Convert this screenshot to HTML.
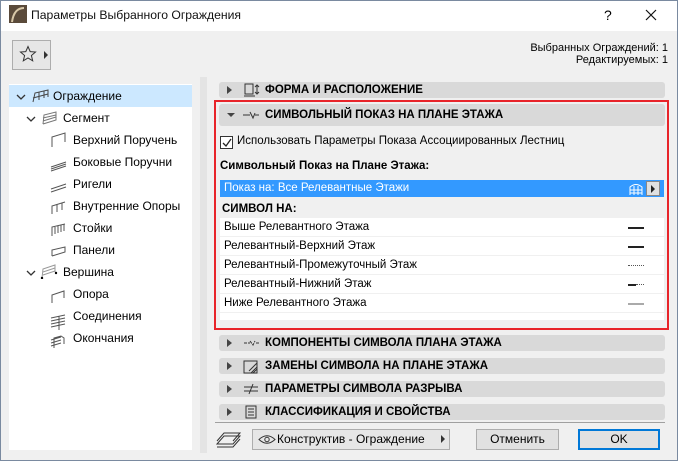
<!DOCTYPE html>
<html><head><meta charset="utf-8"><style>
*{margin:0;padding:0;box-sizing:border-box}
body{width:678px;height:461px;overflow:hidden;font-family:"Liberation Sans","DejaVu Sans",sans-serif;font-size:12px;color:#000;background:#f0f0f0;position:relative}
.abs{position:absolute}
.win{position:absolute;left:0;top:0;width:678px;height:461px;border:1px solid #7a8aa0}
.title{position:absolute;left:1px;top:1px;width:676px;height:30px;background:#fff}
.tree{position:absolute;left:9px;top:84px;width:183px;height:366px;background:#fff}
.ti{position:absolute;height:22px;line-height:22px;white-space:nowrap;font-size:12px}
.chev{position:absolute;width:12px;height:10px}
.hdr{position:absolute;left:219px;width:446px;height:16px;background:#d9d9d9;border-radius:3px;font-weight:bold;font-size:11.5px;line-height:16px}
.hdr .tx{position:absolute;left:46px}
.tri{position:absolute;left:8px;top:4px;width:0;height:0;border-left:5px solid #444;border-top:4px solid transparent;border-bottom:4px solid transparent}
.row{position:absolute;left:220px;width:444px;height:18px;background:#fff;line-height:18px;padding-left:4px;font-size:11.5px}
.sym{position:absolute;right:20px;top:9px;width:16px;height:1.5px;background:#222}
.btn{position:absolute;height:21px;background:#e1e1e1;border:1px solid #adadad;text-align:center;line-height:19px;font-size:12px}
</style></head><body>
<div class="win"></div>
<div class="title"></div>
<svg class="abs" style="left:9px;top:5px" width="18" height="18"><rect width="18" height="18" fill="#5a4a3a"/><path d="M3 17 Q5 3 15 3" stroke="#d8c8a8" stroke-width="2" fill="none"/></svg>
<div class="abs" style="left:31px;top:8px;font-size:12.2px;color:#111">Параметры Выбранного Ограждения</div>
<div class="abs" style="left:604px;top:7px;font-size:14px">?</div>
<svg class="abs" style="left:645px;top:9px" width="12" height="12"><path d="M1 1L11 11M11 1L1 11" stroke="#111" stroke-width="1.2"/></svg>
<div class="abs" style="left:12px;top:40px;width:39px;height:30px;border:1px solid #adadad;background:#e6e6e6"></div>
<svg class="abs" style="left:19px;top:45px" width="18" height="18"><path d="M9 1.5L11.2 6.6 16.5 7 12.4 10.5 13.7 15.8 9 13 4.3 15.8 5.6 10.5 1.5 7 6.8 6.6Z" fill="none" stroke="#333" stroke-width="1"/></svg>
<div class="abs" style="left:44px;top:51px;border-left:4px solid #333;border-top:4px solid transparent;border-bottom:4px solid transparent"></div>
<div class="abs" style="right:10px;top:42px;text-align:right;font-size:11px;line-height:12px">Выбранных Ограждений: 1<br>Редактируемых: 1</div>
<div class="tree"></div>
<div class="abs" style="left:9px;top:85px;width:183px;height:22px;background:#cce8ff"></div>
<div class="abs" style="left:200px;top:77px;width:7px;height:376px;background:#e4e4e4"></div>
<svg class="chev" style="left:15px;top:92px"><path d="M2 3L6 7 10 3" stroke="#333" fill="none" stroke-width="1.3"/></svg>
<svg class="abs" style="left:31px;top:89px" width="18" height="14"><path d="M2 13L4 4 17 1 17 8M2 9L17 5M8 3L8 11M13 2L13 9" stroke="#444" fill="none"/></svg>
<div class="ti" style="left:53px;top:85px">Ограждение</div>
<svg class="chev" style="left:25px;top:114px"><path d="M2 3L6 7 10 3" stroke="#333" fill="none" stroke-width="1.3"/></svg>
<svg class="abs" style="left:41px;top:111px" width="16" height="14"><path d="M2 13L3 4 15 1 15 9 2 13M2 7L15 4M2 10L15 6" stroke="#777" fill="none"/></svg>
<div class="ti" style="left:63px;top:107px">Сегмент</div>
<div class="ti" style="left:73px;top:129px">Верхний Поручень</div>
<div class="ti" style="left:73px;top:151px">Боковые Поручни</div>
<div class="ti" style="left:73px;top:173px">Ригели</div>
<div class="ti" style="left:73px;top:195px">Внутренние Опоры</div>
<div class="ti" style="left:73px;top:217px">Стойки</div>
<div class="ti" style="left:73px;top:239px">Панели</div>
<svg class="chev" style="left:25px;top:268px"><path d="M2 3L6 7 10 3" stroke="#333" fill="none" stroke-width="1.3"/></svg>
<svg class="abs" style="left:40px;top:263px" width="20" height="16"><path d="M2 15L3 6 15 2 15 9M3 9L15 5M3 12L15 8" stroke="#999" fill="none"/><circle cx="2" cy="15" r="1.2"/><circle cx="16" cy="10" r="1.2"/></svg>
<div class="ti" style="left:63px;top:261px">Вершина</div>
<div class="ti" style="left:73px;top:283px">Опора</div>
<div class="ti" style="left:73px;top:305px">Соединения</div>
<div class="ti" style="left:73px;top:327px">Окончания</div>
<svg class="abs" style="left:50px;top:132px" width="18" height="220" stroke="#555" fill="none">
<path d="M2 15L2 5 15 1 15 10"/>
<path d="M1 35L16 30M1 37L16 32M1 39L16 34"/>
<path d="M1 57L16 52M1 60L16 55"/>
<path d="M2 82L2 74 15 70M7 72L7 80M12 71L12 78"/>
<path d="M2 104L2 95 15 92M5 95L5 102M8 94L8 101M11 93L11 100M14 92L14 99"/>
<path d="M2 124L2 118 15 115 15 120 2 124"/>
<path d="M2 171L2 163 14 159 14 166"/>
<path d="M1 186L15 183M1 189L15 186M1 192L15 189M1 195L15 192M9 184L9 198"/>
<path d="M1 208L11 205M1 211L11 208M1 214L11 211M4 216L4 206 11 204 14 206 14 212"/>
</svg>
<div class="hdr" style="top:82px"><div class="tri"></div><svg class="abs" style="left:24px;top:1px" width="18" height="14"><rect x="2" y="1" width="8" height="10" fill="none" stroke="#333"/><path d="M1 13H12M14 2V11M12 4L14 2 16 4M12 9L14 11 16 9" stroke="#333" fill="none"/></svg><span class="tx">ФОРМА И РАСПОЛОЖЕНИЕ</span></div>
<div class="abs" style="left:214px;top:100px;width:455px;height:230px;border:2px solid #e8242a"></div>
<div class="hdr" style="top:104px;height:22px;line-height:22px"><div class="abs" style="left:8px;top:9px;border-top:4px solid #444;border-left:4px solid transparent;border-right:4px solid transparent"></div><svg class="abs" style="left:23px;top:6px" width="18" height="10"><path d="M1 5H8M8 2L11 8 13 3M13 5H17" stroke="#333" fill="none"/></svg><span class="tx">СИМВОЛЬНЫЙ ПОКАЗ НА ПЛАНЕ ЭТАЖА</span></div>
<div class="abs" style="left:220px;top:136px;width:13px;height:13px;border:1px solid #333;background:#fff"></div>
<svg class="abs" style="left:221px;top:137px" width="12" height="12"><path d="M2 6L5 9 10 2" stroke="#222" fill="none" stroke-width="1.3"/></svg>
<div class="abs" style="left:237px;top:135px;font-size:11.5px">Использовать Параметры Показа Ассоциированных Лестниц</div>
<div class="abs" style="left:220px;top:160px;font-weight:bold;font-size:11.5px">Символьный Показ на Плане Этажа:</div>
<div class="abs" style="left:220px;top:180px;width:444px;height:17px;background:#3399ff;color:#fff;line-height:17px;padding-left:4px;font-size:11.5px">Показ на: Все Релевантные Этажи</div>
<svg class="abs" style="left:628px;top:181px" width="16" height="15"><path d="M2 14V6Q8 1 14 6V14M2 9H14M2 12H14M6 5V14M10 5V14" stroke="#fff" fill="none"/></svg>
<div class="abs" style="left:646px;top:181px;width:14px;height:15px;background:#e0e0e0;border:1px solid #888"></div>
<div class="abs" style="left:651px;top:185px;border-left:4px solid #222;border-top:4px solid transparent;border-bottom:4px solid transparent"></div>
<div class="abs" style="left:222px;top:203px;font-weight:bold;font-size:11.5px">СИМВОЛ НА:</div>
<div class="row" style="top:218px">Выше Релевантного Этажа<div class="sym"></div></div>
<div class="row" style="top:237px">Релевантный-Верхний Этаж<div class="sym"></div></div>
<div class="row" style="top:256px">Релевантный-Промежуточный Этаж<div class="sym" style="background:none;border-top:1.5px dotted #555"></div></div>
<div class="row" style="top:275px">Релевантный-Нижний Этаж<div class="sym" style="width:8px;right:28px"></div><div class="sym" style="width:8px;background:none;border-top:1.5px dotted #555"></div></div>
<div class="row" style="top:294px">Ниже Релевантного Этажа<div class="sym" style="background:#aaa"></div></div>
<div class="row" style="top:313px;height:7px"></div>
<div class="hdr" style="top:335px"><div class="tri"></div><svg class="abs" style="left:24px;top:3px" width="18" height="10"><path d="M1 5H7M7 3L10 7 12 3M13 5H17" stroke="#333" fill="none" stroke-dasharray="3 1"/></svg><span class="tx">КОМПОНЕНТЫ СИМВОЛА ПЛАНА ЭТАЖА</span></div>
<div class="hdr" style="top:358px"><div class="tri"></div><svg class="abs" style="left:24px;top:1px" width="16" height="15"><rect x="1" y="2" width="13" height="12" fill="none" stroke="#333"/><path d="M8 14L14 8M10 14L14 10M6 12L14 4" stroke="#333"/></svg><span class="tx">ЗАМЕНЫ СИМВОЛА НА ПЛАНЕ ЭТАЖА</span></div>
<div class="hdr" style="top:381px"><div class="tri"></div><svg class="abs" style="left:24px;top:2px" width="16" height="12"><path d="M1 4H15M1 8H15M6 11L10 1" stroke="#333" fill="none"/></svg><span class="tx">ПАРАМЕТРЫ СИМВОЛА РАЗРЫВА</span></div>
<div class="hdr" style="top:404px"><div class="tri"></div><svg class="abs" style="left:26px;top:1px" width="12" height="14"><rect x="1" y="1" width="10" height="12" fill="none" stroke="#333"/><path d="M3 4H9M3 7H9M3 10H9" stroke="#333"/></svg><span class="tx">КЛАССИФИКАЦИЯ И СВОЙСТВА</span></div>
<div class="abs" style="left:215px;top:422px;width:450px;height:1px;background:#a0a0a0"></div>
<svg class="abs" style="left:216px;top:430px" width="26" height="18"><path d="M1 14L8 6H24L17 14ZM1 11L8 3H24L17 11M1 17H17L24 9" stroke="#333" fill="none"/></svg>
<div class="btn" style="left:252px;top:429px;width:198px;text-align:left;padding-left:24px;background:#e6e6e6">Конструктив - Ограждение</div>
<svg class="abs" style="left:258px;top:434px" width="18" height="11"><path d="M1 5.5Q9 -2 17 5.5Q9 13 1 5.5Z" fill="none" stroke="#333"/><circle cx="9" cy="5.5" r="2.2" fill="none" stroke="#333"/></svg>
<div class="abs" style="left:441px;top:435px;border-left:4px solid #333;border-top:4px solid transparent;border-bottom:4px solid transparent"></div>
<div class="btn" style="left:476px;top:429px;width:83px">Отменить</div>
<div class="btn" style="left:578px;top:429px;width:82px;border:2px solid #0078d7;line-height:17px">OK</div>
</body></html>
